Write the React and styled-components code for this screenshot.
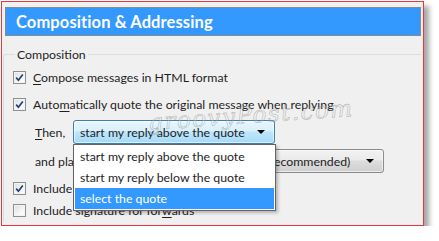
import styled, { createGlobalStyle } from "styled-components";

const GlobalStyle = createGlobalStyle`
  body {
    margin: 0;
    background: #ffffff;
    font-family: Lato, "Noto Sans", sans-serif;
  }
`;

const Frame = styled.div`
  position: relative;
  box-sizing: border-box;
  width: 423px;
  height: 225px;
  margin: 1px 0 0 1px;
  padding: 5px 2px 0 3px;
  background: #f0f0f0;
  border: 1px solid #e8363b;
  box-shadow: 5px 5px 5px rgba(0, 0, 0, 0.35);
`;

const Header = styled.div`
  box-sizing: border-box;
  height: 29px;
  display: flex;
  align-items: center;
  padding-left: 10px;
  background: #3399ff;
  border: 1px solid #8a8a8a;
  color: #ffffff;
  font-weight: 700;
  font-size: 16.5px;
  letter-spacing: 0.1px;
`;

const Group = styled.fieldset`
  margin: 11px 0 0 -2px;
  padding: 4px 0 0 9px;
  border: 1px solid #d5dfe5;
  border-bottom: none;
  border-right: none;
  border-radius: 3px 0 0 0;
  min-width: 0;
`;

const Legend = styled.legend`
  padding: 0 2px;
  margin-left: 2px;
  font-size: 12.3px;
  color: #1e1e1e;
`;

const Row = styled.div`
  display: flex;
  align-items: center;
  height: ${(p) => p.$h || 22}px;
  padding-left: ${(p) => p.$indent || 0}px;
  font-size: 12.3px;
  color: #1e1e1e;
  white-space: nowrap;
`;

const Box = styled.span`
  box-sizing: border-box;
  width: 13px;
  height: 13px;
  margin-right: 7px;
  display: flex;
  align-items: center;
  justify-content: center;
  border: 1px solid #8e8f8f;
  background: linear-gradient(135deg, #dcdcdc 0%, #f6f6f6 60%, #ffffff 100%);
  box-shadow: inset 0 0 0 1px #f4f4f4;
`;

const Key = styled.span`
  text-decoration: underline;
  text-underline-offset: 2px;
`;

const Label = styled.span`
  width: ${(p) => p.$w}px;
  flex: none;
`;

const Select = styled.div`
  position: relative;
  box-sizing: border-box;
  width: ${(p) => p.$w}px;
  height: 24px;
  display: flex;
  align-items: center;
  justify-content: space-between;
  padding: 0 9px 0 6px;
  border: 1px solid ${(p) => (p.$active ? "#3c7fb1" : "#8a8a8a")};
  border-radius: 3px;
  background: ${(p) =>
    p.$active
      ? "linear-gradient(#eaf6fd 0%, #d9f0fc 45%, #bee6fd 50%, #a7d9f5 100%)"
      : "linear-gradient(#f2f2f2 0%, #ebebeb 45%, #dddddd 50%, #cfcfcf 100%)"};
  box-shadow: inset 0 0 0 1px rgba(255, 255, 255, 0.6);
`;

const Arrow = styled.span`
  width: 0;
  height: 0;
  border-left: 4px solid transparent;
  border-right: 4px solid transparent;
  border-top: 4px solid #000;
`;

const Popup = styled.div`
  position: absolute;
  left: -1px;
  top: 23px;
  z-index: 2;
  box-sizing: border-box;
  width: 203px;
  padding: 1px;
  background: #ffffff;
  border: 1px solid #646464;
  box-shadow: 2px 2px 3px rgba(0, 0, 0, 0.25);
`;

const Option = styled.div`
  height: 21px;
  display: flex;
  align-items: center;
  padding-left: 5px;
  background: ${(p) => (p.$selected ? "#3399ff" : "transparent")};
  color: ${(p) => (p.$selected ? "#ffffff" : "#1e1e1e")};
`;

const Watermark = styled.div`
  position: absolute;
  left: 146px;
  top: 100px;
  z-index: 3;
  font-family: "DejaVu Serif", serif;
  font-style: italic;
  font-size: 23px;
  letter-spacing: 1.5px;
  color: rgba(255, 255, 255, 0.2);
  -webkit-text-stroke: 0.6px rgba(120, 120, 120, 0.5);
  transform: rotate(-4deg);
  pointer-events: none;
`;

function Check({ checked }) {
  return (
    <Box>
      {checked && (
        <svg width="9" height="9" viewBox="0 0 9 9">
          <path
            d="M1.2 4.6 L3.4 7.2 L7.8 1.4"
            fill="none"
            stroke="#1f3f7a"
            strokeWidth="1.7"
          />
        </svg>
      )}
    </Box>
  );
}

export default function App() {
  return (
    <>
      <GlobalStyle />
      <Frame>
        <Header>Composition &amp; Addressing</Header>
        <Group>
          <Legend>Composition</Legend>
          <Row $h={22}>
            <Check checked />
            <span>
              <Key>C</Key>ompose messages in HTML format
            </span>
          </Row>
          <Row $h={32}>
            <Check checked />
            <span>
              Auto<Key>m</Key>atically quote the original message when replying
            </span>
          </Row>
          <Row $h={24} $indent={22}>
            <Label $w={38}>
              <Key>T</Key>hen,
            </Label>
            <Select $w={202} $active>
              <span>start my reply above the quote</span>
              <Arrow />
              <Popup>
                <Option>start my reply above the quote</Option>
                <Option>start my reply below the quote</Option>
                <Option $selected>select the quote</Option>
              </Popup>
            </Select>
          </Row>
          <Row $h={34} $indent={22}>
            <Label $w={140}>and place my signature</Label>
            <Select $w={209}>
              <span>below my reply (recommended)</span>
              <Arrow />
            </Select>
          </Row>
          <Row $h={20}>
            <Check checked />
            <span>Include signature for replies</span>
          </Row>
          <Row $h={24}>
            <Check />
            <span>
              Include signature for for<Key>w</Key>ards
            </span>
          </Row>
        </Group>
        <Watermark>groovyPost.com</Watermark>
      </Frame>
    </>
  );
}
